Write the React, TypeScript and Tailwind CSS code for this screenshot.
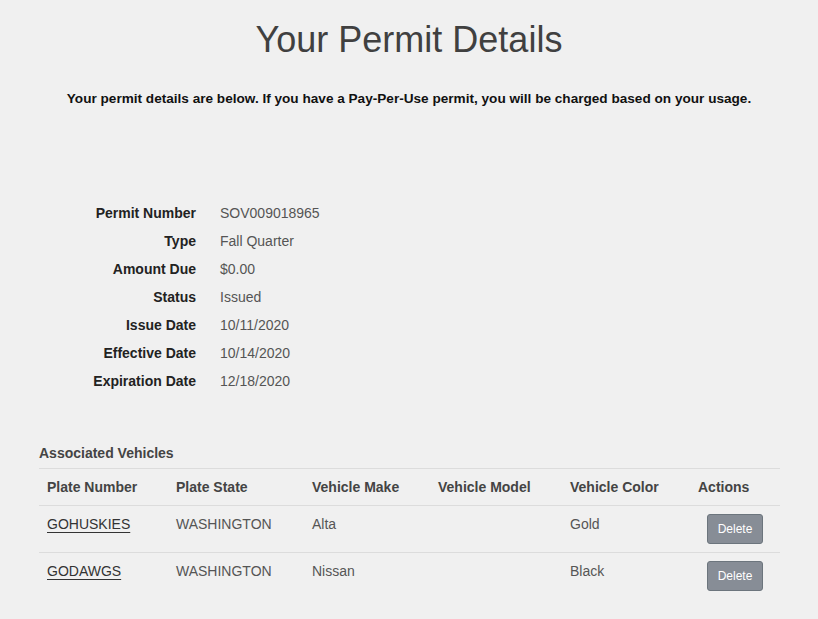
import { Fragment } from "react";

const details = [
  ["Permit Number", "SOV009018965"],
  ["Type", "Fall Quarter"],
  ["Amount Due", "$0.00"],
  ["Status", "Issued"],
  ["Issue Date", "10/11/2020"],
  ["Effective Date", "10/14/2020"],
  ["Expiration Date", "12/18/2020"],
];

const vehicles = [
  { plate: "GOHUSKIES", state: "WASHINGTON", make: "Alta", model: "", color: "Gold" },
  { plate: "GODAWGS", state: "WASHINGTON", make: "Nissan", model: "", color: "Black" },
];

export default function App() {
  return (
    <div className="min-h-[619px] bg-[#f0f0f0] font-['Liberation_Sans',Arial,sans-serif] text-[14px] text-[#555]">
      <h1 className="pt-[17px] text-center text-[36px] leading-[46px] text-[#404040]">Your Permit Details</h1>
      <p className="mt-[26px] text-center text-[13.6px] font-bold leading-[20px] text-[#111]">
        Your permit details are below. If you have a Pay-Per-Use permit, you will be charged based on your usage.
      </p>

      <div className="mt-[94px] grid grid-cols-[196px_1fr] gap-x-6 gap-y-[8px] leading-[20px]">
        {details.map(([label, value]) => (
          <Fragment key={label}>
            <div className="text-right font-bold text-[#222]">{label}</div>
            <div>{value}</div>
          </Fragment>
        ))}
      </div>

      <div className="mx-[39px] mt-[52px] w-[741px]">
        <div className="pb-[5px] font-bold leading-[20px] text-[#444]">Associated Vehicles</div>
        <table className="w-full border-collapse text-left">
          <thead>
            <tr className="border-y border-[#dcdcdc]">
              <th className="w-[129px] px-2 py-2 font-bold leading-[20px] text-[#444]">Plate Number</th>
              <th className="w-[136px] px-2 py-2 font-bold leading-[20px] text-[#444]">Plate State</th>
              <th className="w-[126px] px-2 py-2 font-bold leading-[20px] text-[#444]">Vehicle Make</th>
              <th className="w-[132px] px-2 py-2 font-bold leading-[20px] text-[#444]">Vehicle Model</th>
              <th className="w-[128px] px-2 py-2 font-bold leading-[20px] text-[#444]">Vehicle Color</th>
              <th className="px-2 py-2 font-bold leading-[20px] text-[#444]">Actions</th>
            </tr>
          </thead>
          <tbody>
            {vehicles.map((v) => (
              <tr key={v.plate} className="border-b border-[#dcdcdc] last:border-b-0">
                <td className="px-2 pt-[8px] pb-2 align-top leading-[20px]">
                  <a href="#" className="text-[#333] underline decoration-[#333] underline-offset-[3px]">{v.plate}</a>
                </td>
                <td className="px-2 pt-[8px] pb-2 align-top leading-[20px]">{v.state}</td>
                <td className="px-2 pt-[8px] pb-2 align-top leading-[20px]">{v.make}</td>
                <td className="px-2 pt-[8px] pb-2 align-top leading-[20px]">{v.model}</td>
                <td className="px-2 pt-[8px] pb-2 align-top leading-[20px]">{v.color}</td>
                <td className="px-2 py-2 text-center align-top">
                  <button className="h-[30px] w-[56px] rounded-[3px] border border-[#6c757d] bg-[#878d96] text-[12px] text-white">
                    Delete
                  </button>
                </td>
              </tr>
            ))}
          </tbody>
        </table>
      </div>
    </div>
  );
}
